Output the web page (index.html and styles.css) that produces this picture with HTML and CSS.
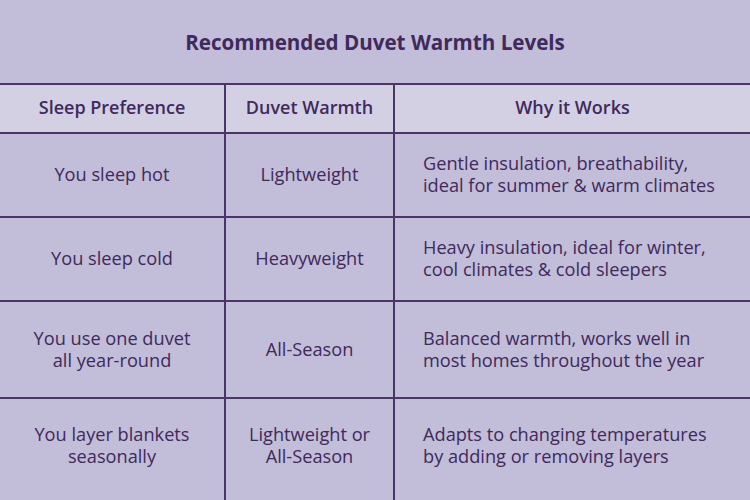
FILE: index.html
```html
<!DOCTYPE html>
<html>
<head>
<meta charset="utf-8">
<link rel="stylesheet" href="styles.css">
</head>
<body>
<div class="page">
  <h1 class="title">Recommended Duvet Warmth Levels</h1>
  <div class="table">
    <div class="cell head">Sleep Preference</div>
    <div class="cell head">Duvet Warmth</div>
    <div class="cell head last">Why it Works</div>

    <div class="cell r1">You sleep hot</div>
    <div class="cell r1">Lightweight</div>
    <div class="cell r1 last why">Gentle insulation, breathability,<br>ideal for summer &amp; warm climates</div>

    <div class="cell r2">You sleep cold</div>
    <div class="cell r2">Heavyweight</div>
    <div class="cell r2 last why">Heavy insulation, ideal for winter,<br>cool climates &amp; cold sleepers</div>

    <div class="cell r3">You use one duvet<br>all year-round</div>
    <div class="cell r3">All-Season</div>
    <div class="cell r3 last why">Balanced warmth, works well in<br>most homes throughout the year</div>

    <div class="cell r4 end">You layer blankets<br>seasonally</div>
    <div class="cell r4 end">Lightweight or<br>All-Season</div>
    <div class="cell r4 end last why">Adapts to changing temperatures<br>by adding or removing layers</div>
  </div>
</div>
</body>
</html>
```
FILE: styles.css
```css
* { box-sizing: border-box; }
html, body { margin: 0; padding: 0; }
body {
  width: 750px;
  height: 500px;
  overflow: hidden;
  background: #c2bdd8;
  font-family: "Open Sans", "Liberation Sans", sans-serif;
  color: #40295c;
}
.page { width: 750px; height: 500px; display: flex; flex-direction: column; }
.title {
  margin: 0;
  height: 83px;
  display: flex;
  align-items: center;
  justify-content: center;
  font-size: 20.6px;
  font-weight: 700;
  color: #40295c;
}
.table {
  flex: 1;
  display: grid;
  grid-template-columns: 226px 169px 1fr;
  grid-template-rows: 49px 84px 84px 97px 1fr;
  border-top: 2px solid #4b3468;
}
.cell {
  display: flex;
  align-items: center;
  justify-content: center;
  text-align: center;
  font-size: 18.2px;
  line-height: 22px;
  border-right: 2px solid #4b3468;
  border-bottom: 2px solid #4b3468;
  padding-bottom: 2px;
}
.cell.last { border-right: none; }
.cell.end { border-bottom: none; padding-bottom: 10px; }
.head {
  background: #d3d0e3;
  font-size: 18px;
  font-weight: 600;
  padding-bottom: 3px;
}
.why {
  justify-content: flex-start;
  text-align: left;
  padding-left: 28px;
}
```
